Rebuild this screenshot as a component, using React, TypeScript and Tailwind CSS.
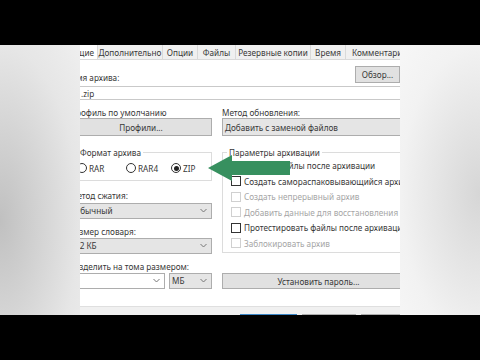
import React from "react";

function Chevron() {
  return (
    <svg width="7" height="5" viewBox="0 0 7 5" className="shrink-0">
      <polyline points="0.5,1 3.5,4 6.5,1" fill="none" stroke="#777" strokeWidth="1" />
    </svg>
  );
}

function Radio({ label, checked, w }: { label: string; checked?: boolean; w: string }) {
  return (
    <div className={`flex items-center gap-[2px] ${w}`}>
      <div className="w-[10px] h-[10px] rounded-full border border-[#333] bg-white flex items-center justify-center shrink-0">
        {checked && <div className="w-[5px] h-[5px] rounded-full bg-[#222]" />}
      </div>
      <span>{label}</span>
    </div>
  );
}

function Check({ label, disabled }: { label: string; disabled?: boolean }) {
  return (
    <div className="h-[15.5px] flex items-center gap-[3px] whitespace-nowrap">
      <div
        className={
          disabled
            ? "w-[10px] h-[10px] border border-[#d0d0d0] bg-white shrink-0"
            : "w-[10px] h-[10px] border border-[#333] bg-white shrink-0"
        }
      />
      <span className={disabled ? "text-[#a6a6a6]" : ""}>{label}</span>
    </div>
  );
}

export default function App() {
  const tabs = [
    { t: "Дополнительно", w: "w-[65px]" },
    { t: "Опции", w: "w-[35px]" },
    { t: "Файлы", w: "w-[38px]" },
    { t: "Резервные копии", w: "w-[75px]" },
    { t: "Время", w: "w-[35px]" },
  ];

  return (
    <div className="relative w-[480px] h-[360px] bg-black flex flex-col font-['Noto_Sans',sans-serif] text-[8.2px] leading-[11px] text-[#383838]">
      <div className="h-[45px] shrink-0" />
      <div className="h-[270px] flex shrink-0">
        <div className="w-[80px] bg-[radial-gradient(ellipse_at_0%_65%,#c0c0c0,#e6e6e6_70%,#efefef)]" />
        <div className="w-[320px] bg-white overflow-hidden">
          <div className="-ml-[10px] w-[345px] flex flex-col">
            {/* tabs */}
            <div className="h-[15px] flex bg-[#f0f0f0] border-b border-[#d9d9d9] whitespace-nowrap">
              <div className="w-[27px] bg-white flex items-center justify-end pr-[3px] overflow-hidden shrink-0">
                <span>Общие</span>
              </div>
              {tabs.map((tab) => (
                <div
                  key={tab.t}
                  className={`${tab.w} border-l border-[#d9d9d9] flex items-center justify-center shrink-0`}
                >
                  {tab.t}
                </div>
              ))}
              <div className="w-[80px] border-l border-[#d9d9d9] flex items-center pl-[6px] shrink-0">
                Комментарий
              </div>
            </div>

            {/* archive name */}
            <div className="mt-[6px] h-[17px] flex items-end justify-between">
              <span>Имя архива:</span>
              <div className="w-[45px] h-[17px] mr-[15px] bg-[#e1e1e1] border border-[#adadad] flex items-center justify-center whitespace-nowrap">
                Обзор...
              </div>
            </div>
            <div className="mt-[3px] h-[14px] border border-[#c9c9c9] pl-[10px] flex items-center">
              .zip
            </div>

            {/* profile / update method */}
            <div className="mt-[7px] flex gap-[10px]">
              <div className="w-[142px] flex flex-col">
                <span>Профиль по умолчанию</span>
                <div className="h-[18px] bg-[#e1e1e1] border border-[#adadad] flex items-center justify-center">
                  Профили...
                </div>
              </div>
              <div className="flex-1 flex flex-col">
                <span>Метод обновления:</span>
                <div className="h-[18px] bg-[#e5e5e5] border border-[#adadad] flex items-center pl-[2px] whitespace-nowrap">
                  Добавить с заменой файлов
                </div>
              </div>
            </div>

            {/* columns */}
            <div className="mt-[11px] flex gap-[10px]">
              <div className="w-[142px] flex flex-col">
                <fieldset className="border border-[#dcdcdc]">
                  <legend className="ml-[7px] px-[2px]">Формат архива</legend>
                  <div className="mt-[4px] mb-[6px] pl-[6px] h-[12px] flex items-center">
                    <Radio label="RAR" w="w-[49px]" />
                    <Radio label="RAR4" w="w-[45px]" />
                    <Radio label="ZIP" checked w="w-[30px]" />
                  </div>
                </fieldset>

                <span className="mt-[9px]">Метод сжатия:</span>
                <div className="mt-[1.5px] h-[16px] bg-[#e5e5e5] border border-[#adadad] flex items-center justify-between pl-[3px] pr-[4px]">
                  <span>Обычный</span>
                  <Chevron />
                </div>

                <span className="mt-[7px]">Размер словаря:</span>
                <div className="mt-[1px] h-[16px] bg-[#e5e5e5] border border-[#adadad] flex items-center justify-between pl-[4px] pr-[4px]">
                  <span>32 КБ</span>
                  <Chevron />
                </div>

                <span className="mt-[7px] whitespace-nowrap">Разделить на тома размером:</span>
                <div className="mt-[1px] h-[16px] flex gap-[4px]">
                  <div className="flex-1 bg-white border border-[#adadad] flex items-center justify-end pr-[4px]">
                    <Chevron />
                  </div>
                  <div className="w-[43px] bg-[#e5e5e5] border border-[#adadad] flex items-center justify-between pl-[2px] pr-[4px]">
                    <span>МБ</span>
                    <Chevron />
                  </div>
                </div>
              </div>

              <div className="flex-1 flex flex-col">
                <fieldset className="border border-[#dcdcdc]">
                  <legend className="ml-[4px] px-[2px]">Параметры архивации</legend>
                  <div className="pl-[8px] pb-[1px]">
                    <Check label="Удалить файлы после архивации" />
                    <Check label="Создать самораспаковывающийся архив" />
                    <Check label="Создать непрерывный архив" disabled />
                    <Check label="Добавить данные для восстановления" disabled />
                    <Check label="Протестировать файлы после архивации" />
                    <Check label="Заблокировать архив" disabled />
                  </div>
                </fieldset>
                <div className="mt-[20px] h-[16px] bg-[#e1e1e1] border border-[#adadad] flex items-center justify-center">
                  Установить пароль...
                </div>
              </div>
            </div>

            {/* bottom bar */}
            <div className="mt-[17px] h-[20px] bg-[#f0f0f0] border-t border-[#dfdfdf] flex gap-[5px] pt-[7px] pl-[170px]">
              <div className="w-[60px] h-[20px] border-2 border-[#3b86c6] bg-[#e5f1fb]" />
              <div className="w-[57px] h-[20px] border border-[#adadad] bg-[#e1e1e1]" />
              <div className="w-[57px] h-[20px] border border-[#adadad] bg-[#e1e1e1]" />
            </div>
          </div>
        </div>
        <div className="w-[80px] bg-[radial-gradient(ellipse_at_100%_55%,#d6d6d6,#f2f2f2_70%,#f7f7f7)]" />
      </div>
      <div className="flex-1" />

      {/* green arrow */}
      <svg className="absolute left-0 top-0" width="480" height="360" viewBox="0 0 480 360">
        <polygon
          points="208,168 232,155 232,161 290,161 290,175 232,175 232,181"
          fill="#37905f"
        />
      </svg>
    </div>
  );
}
